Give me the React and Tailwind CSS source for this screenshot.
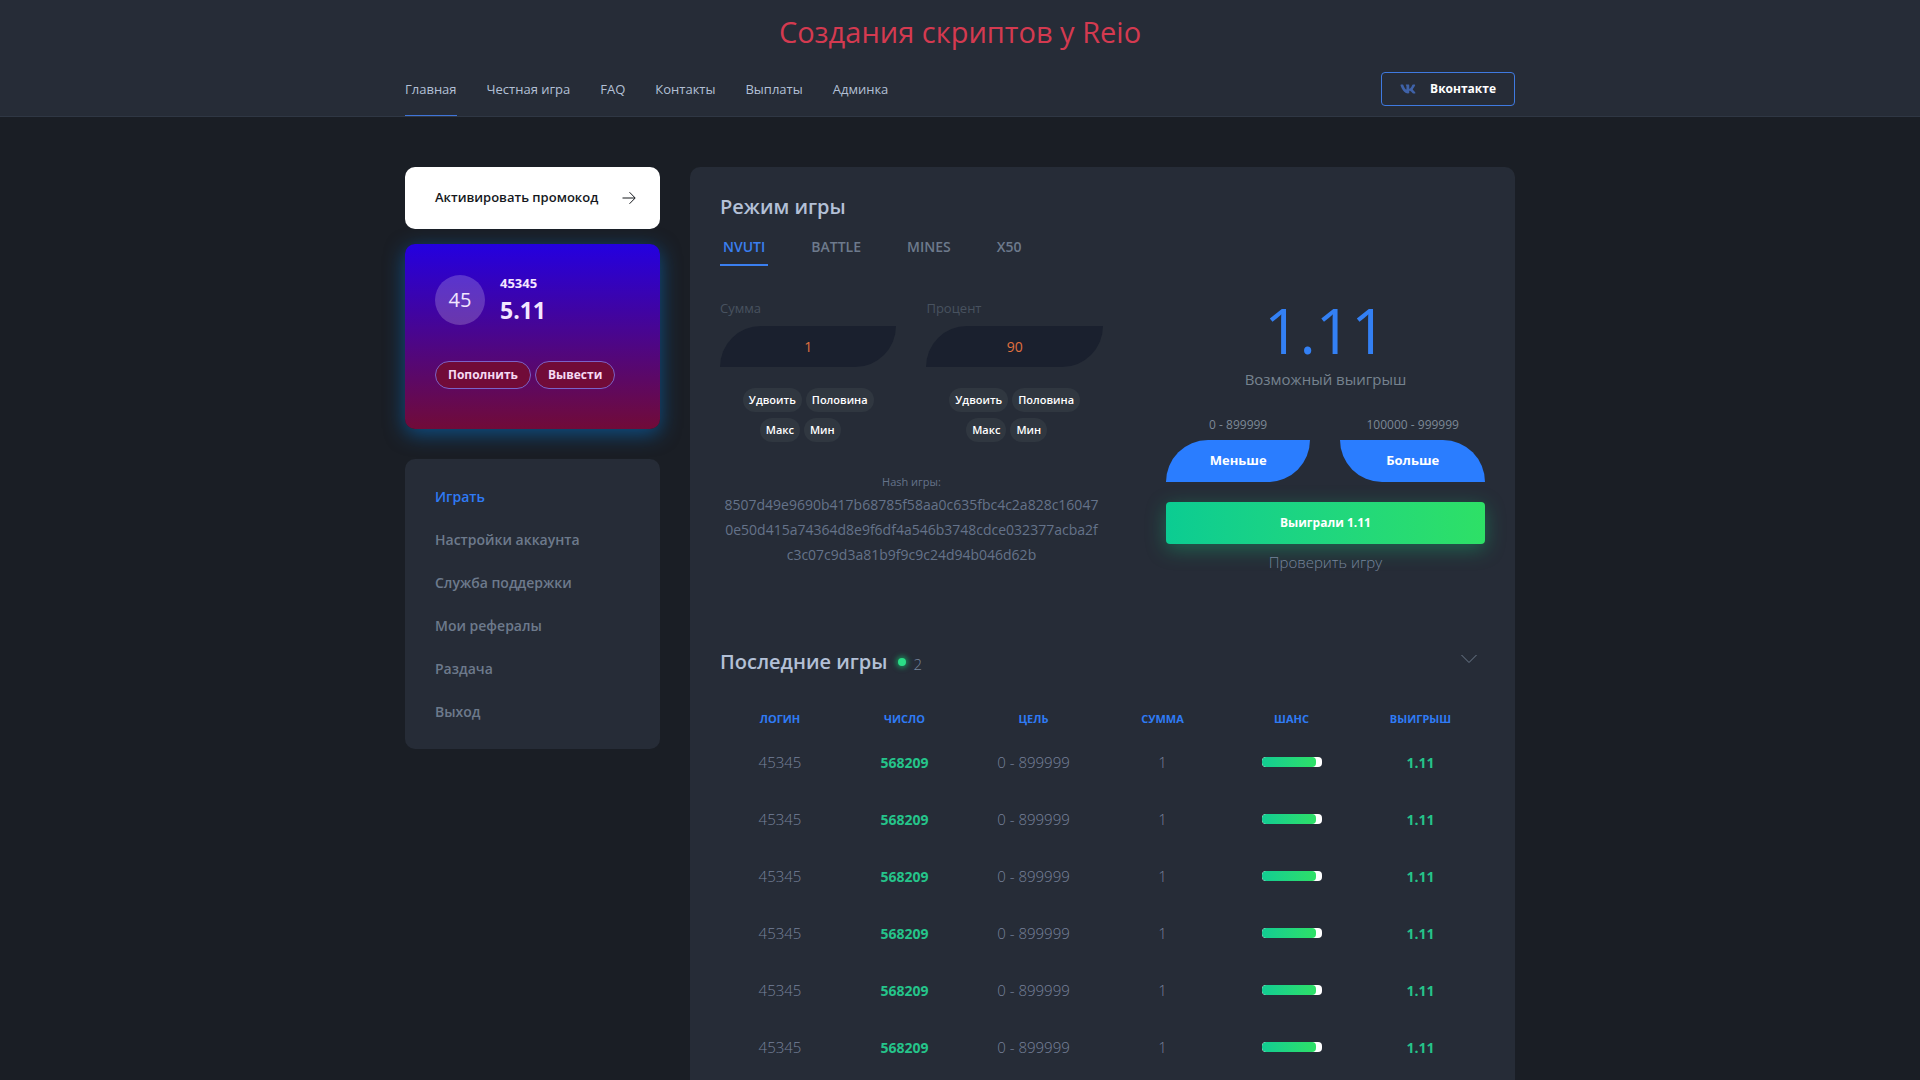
import { useState } from 'react';
import { FaVk } from 'react-icons/fa';

const NAV_LINKS = ['Главная', 'Честная игра', 'FAQ', 'Контакты', 'Выплаты', 'Админка'];
const MENU_LINKS = ['Играть', 'Настройки аккаунта', 'Служба поддержки', 'Мои рефералы', 'Раздача', 'Выход'];
const MODES = ['NVUTI', 'BATTLE', 'MINES', 'X50'];
const COLUMNS = ['Логин', 'Число', 'Цель', 'Сумма', 'Шанс', 'Выигрыш'];

const GAMES = Array.from({ length: 6 }, (_, i) => ({
  id: i + 1,
  login: '45345',
  number: '568209',
  target: '0 - 899999',
  sum: 1,
  chance: 90,
  win: '1.11',
}));

const HASH_LINES = [
  '8507d49e9690b417b68785f58aa0c635fbc4c2a828c16047',
  '0e50d415a74364d8e9f6df4a546b3748cdce032377acba2f',
  'c3c07c9d3a81b9f9c9c24d94b046d62b',
];

const Header = () => (
  <header className="border-b border-[#2f3744] bg-[#262c37]">
    <h1 className="pt-3 text-center text-[29px] leading-10 font-medium text-[#d43a50]">Создания скриптов у Reio</h1>
    <div className="mx-auto flex h-16 max-w-[1110px] items-center justify-between">
      <nav className="flex h-full gap-[30px]">
        {NAV_LINKS.map((link, i) => (
          <a
            key={link}
            href="#"
            className={`flex items-center border-b pt-3 text-[13px] text-[#b3c0d6] ${i === 0 ? 'border-[#3f74d8]' : 'border-transparent'}`}
          >
            {link}
          </a>
        ))}
      </nav>
      <a href="#" className="mt-2.5 flex h-[34px] items-center gap-3.5 rounded border border-[#3f7ae0] px-[18px] text-xs font-bold text-white">
        <FaVk className="h-4 w-4 text-[#3f62a8]" />
        Вконтакте
      </a>
    </div>
  </header>
);

const Sidebar = () => (
  <aside>
    <button className="flex h-[62px] w-full items-center justify-between rounded-[10px] bg-white pr-6 pl-[30px] text-[13px] font-semibold text-[#15181d]">
      Активировать промокод
      <svg className="h-3.5 w-3.5" viewBox="0 0 14 14" fill="none" stroke="currentColor">
        <path d="M0.5 7H13M7.5 1.2L13.2 7L7.5 12.8" />
      </svg>
    </button>

    <div className="mt-[15px] h-[185px] rounded-[10px] bg-linear-to-b/srgb from-[#2400e0] to-[#710b38] px-[30px] pt-[31px] shadow-[0_5px_20px_rgba(0,120,215,0.55)]">
      <div className="flex gap-[15px] text-[#f3e6ff]">
        <div className="flex h-[50px] w-[50px] items-center justify-center rounded-full bg-white/20 text-xl">45</div>
        <div>
          <div className="text-[13px] leading-4 font-bold">45345</div>
          <div className="text-[23px] leading-[38px] font-bold">5.11</div>
        </div>
      </div>
      <div className="mt-8 flex gap-1">
        <button className="h-7 rounded-full border border-[#7a62c8] bg-[#710b38] px-3 text-xs font-bold text-[#f6d9f2]">Пополнить</button>
        <button className="h-7 rounded-full border border-[#7a62c8] bg-[#710b38] px-3 text-xs font-bold text-[#f6d9f2]">Вывести</button>
      </div>
    </div>

    <nav className="mt-[30px] rounded-[10px] bg-[#262c37] px-[30px] py-4">
      {MENU_LINKS.map((link, i) => (
        <a
          key={link}
          href="#"
          className={`flex h-[43px] items-center text-sm font-semibold ${i === 0 ? 'text-[#2f7bf5]' : 'text-[#6d7a8c]'}`}
        >
          {link}
        </a>
      ))}
    </nav>
  </aside>
);

const PillButton = ({ children }) => (
  <button className="h-6 rounded-full bg-[#303740] px-1.5 text-[11px] font-semibold text-white">{children}</button>
);

const BetField = ({ id, label, value, onChange }) => (
  <div className="min-w-0 flex-1">
    <label htmlFor={id} className="block text-[13px] leading-9 text-[#48525f]">{label}</label>
    <input
      id={id}
      className="h-[41px] w-full rounded-tl-[41px] rounded-br-[41px] bg-[#1a202e] text-center text-sm text-[#e0703f] outline-none"
      value={value}
      onChange={(e) => onChange(e.target.value)}
    />
    <div className="mt-[21px] flex justify-center gap-1">
      <PillButton>Удвоить</PillButton>
      <PillButton>Половина</PillButton>
    </div>
    <div className="mt-1.5 mr-4 flex justify-center gap-1">
      <PillButton>Макс</PillButton>
      <PillButton>Мин</PillButton>
    </div>
  </div>
);

const BetPanel = () => {
  const [sum, setSum] = useState('1');
  const [percent, setPercent] = useState('90');

  return (
    <div className="mt-6 flex gap-[63px]">
      <div className="min-w-0 flex-[6]">
        <div className="flex gap-[30px]">
          <BetField id="sum" label="Сумма" value={sum} onChange={setSum} />
          <BetField id="percent" label="Процент" value={percent} onChange={setPercent} />
        </div>
        <div className="mt-[30px] text-center text-[#65738a]">
          <div className="text-[11px] leading-5">Hash игры:</div>
          <p className="text-sm leading-[25px]">
            {HASH_LINES.map((line) => (
              <span key={line} className="block">{line}</span>
            ))}
          </p>
        </div>
      </div>

      <div className="min-w-0 flex-[5] text-center">
        <div className="mt-1 text-[62px] leading-[73px] text-[#3380f4]">1.11</div>
        <div className="text-[15px] leading-6 font-medium text-[#76838f]">Возможный выигрыш</div>
        <div className="mt-[22px] grid grid-cols-2 gap-[30px]">
          <div>
            <div className="text-xs leading-6 text-[#7c8896]">0 - 899999</div>
            <button className="mt-[3px] h-[42px] w-full rounded-tl-[42px] rounded-br-[42px] bg-[#2a7dff] text-[13px] font-bold text-white">Меньше</button>
          </div>
          <div>
            <div className="text-xs leading-6 text-[#7c8896]">100000 - 999999</div>
            <button className="mt-[3px] h-[42px] w-full rounded-tr-[42px] rounded-bl-[42px] bg-[#2a7dff] text-[13px] font-bold text-white">Больше</button>
          </div>
        </div>
        <div className="mt-5 flex h-[42px] items-center justify-center rounded bg-linear-to-r from-[#0bcc92] to-[#2ee066] text-xs font-bold text-white shadow-[0_5px_20px_rgba(20,210,130,0.35)]">
          Выиграли 1.11
        </div>
        <a href="#" className="mt-1.5 block text-[15px] leading-6 font-light text-[#76859b]">Проверить игру</a>
      </div>
    </div>
  );
};

const LastGames = () => (
  <section className="mt-[73px]">
    <div className="flex items-center pr-2">
      <h2 className="text-xl leading-[30px] font-semibold text-[#b3c0d6]">Последние игры</h2>
      <span className="ml-2.5 h-2 w-2 rounded-full bg-[#2bdc86] shadow-[0_0_5px_2px_rgba(20,190,110,0.6)]" />
      <span className="mt-1 ml-2 text-[15px] font-light text-[#76859b]">2</span>
      <button aria-label="Свернуть" className="mb-1.5 ml-auto text-[#6d7a8c]">
        <svg className="h-4 w-4" viewBox="0 0 16 16" fill="none" stroke="currentColor">
          <path d="M0.5 4L8 11.5L15.5 4" />
        </svg>
      </button>
    </div>

    <table className="mt-[25px] w-full table-fixed text-center">
      <thead>
        <tr className="h-[35px] text-[11px] text-[#2f7bf5] uppercase">
          {COLUMNS.map((column, i) => (
            <th key={column} className={`font-bold ${i === 0 ? 'w-[120px]' : ''}`}>{column}</th>
          ))}
        </tr>
      </thead>
      <tbody>
        {GAMES.map((game) => (
          <tr key={game.id} className="h-[57px] align-top text-[15px] leading-[51px] font-light text-[#76819a]">
            <td>{game.login}</td>
            <td className="text-sm leading-[51px] font-bold text-[#25c48a]">{game.number}</td>
            <td>{game.target}</td>
            <td>{game.sum}</td>
            <td>
              <div className="mx-auto mt-5 h-2.5 w-[60px] overflow-hidden rounded bg-white">
                <div className="h-full rounded bg-linear-to-r from-[#12cc92] to-[#2ee066]" style={{ width: `${game.chance}%` }} />
              </div>
            </td>
            <td className="text-sm leading-[51px] font-bold text-[#25c48a]">{game.win}</td>
          </tr>
        ))}
      </tbody>
    </table>
  </section>
);

const App = () => {
  const [mode, setMode] = useState('NVUTI');

  return (
    <div className="min-h-screen bg-[#1a1e25] font-['Open_Sans','Noto_Sans',sans-serif]">
      <Header />
      <div className="mx-auto grid max-w-[1110px] grid-cols-4 gap-[30px] pt-[50px]">
        <Sidebar />
        <main className="col-span-3 rounded-t-[10px] bg-[#262c37] px-[30px] pt-[25px] pb-8">
          <h2 className="text-xl leading-[30px] font-semibold text-[#b3c0d6]">Режим игры</h2>
          <div className="mt-2.5 flex gap-10">
            {MODES.map((item) => (
              <button
                key={item}
                onClick={() => setMode(item)}
                className={`h-[34px] border-b-2 px-[3px] pb-0.5 text-sm font-semibold ${item === mode ? 'border-[#3a7ff0] text-[#3a7ff0]' : 'border-transparent text-[#6d7a8c]'}`}
              >
                {item}
              </button>
            ))}
          </div>
          <BetPanel />
          <LastGames />
        </main>
      </div>
    </div>
  );
};

export default App;
